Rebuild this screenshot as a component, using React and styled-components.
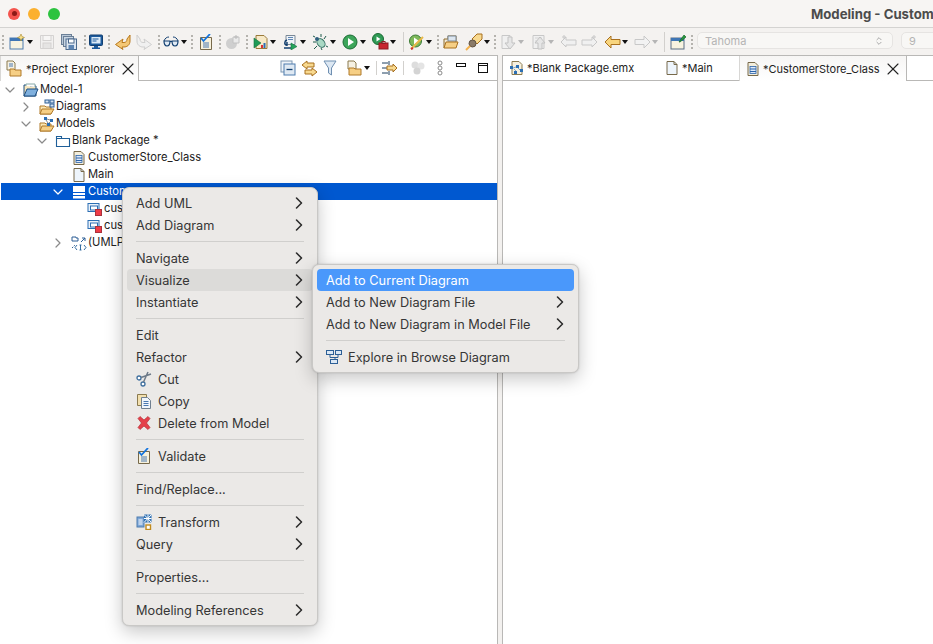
import React from 'react';
import styled, { createGlobalStyle } from 'styled-components';
import { ChevronRight, ChevronDown, X, ChevronsUpDown } from 'lucide-react';

const Global = createGlobalStyle`
  html, body { margin: 0; padding: 0; background: #fff; }
  body { font-family: Inter, "Noto Sans", "Liberation Sans", sans-serif; color: #222; }
  * { box-sizing: border-box; }
  svg { flex: none; }
`;

const Window = styled.div`
  position: relative;
  width: 933px;
  height: 644px;
  overflow: hidden;
  background: #f3f1ef;
  display: flex;
  flex-direction: column;
`;

const TitleBar = styled.div`
  height: 28px;
  flex: none;
  display: flex;
  align-items: center;
  padding-left: 8px;
  background: #f7f5f3;
  border-bottom: 1px solid #d4d3d1;
  overflow: hidden;
`;

const Light = styled.span`
  flex: none;
  width: 12px;
  height: 12px;
  border-radius: 50%;
  margin-right: 8px;
  background: ${p => p.$color};
  display: flex;
  align-items: center;
  justify-content: center;
  &::after {
    content: '';
    width: 5px;
    height: 5px;
    border-radius: 50%;
    background: ${p => p.$dot || 'transparent'};
  }
`;

const Title = styled.div`
  flex: none;
  margin-left: 743px;
  font-size: 13.2px;
  font-weight: 700;
  color: #4c4c4c;
  white-space: nowrap;
`;

const Toolbar = styled.div`
  height: 27px;
  flex: none;
  display: flex;
  align-items: center;
  background: #f4f2f0;
`;

const Slot = styled.span`
  flex: none;
  display: flex;
  align-items: center;
  justify-content: center;
  width: ${p => p.$w}px;
  margin-left: ${p => p.$gap}px;
  opacity: ${p => (p.$off ? 0.35 : 1)};
`;

const Grip = styled.span`
  flex: none;
  width: 2px;
  height: 14px;
  margin-left: ${p => p.$gap}px;
  background: repeating-linear-gradient(to bottom, #b5b3ae 0 2px, transparent 2px 4px);
`;

const VLine = styled.span`
  flex: none;
  width: 1px;
  height: ${p => p.$h || 20}px;
  margin-left: ${p => p.$gap}px;
  background: #d2d0cd;
`;

const Arrow = styled.span`
  flex: none;
  width: 0;
  height: 0;
  margin-left: ${p => p.$gap}px;
  border-left: 3px solid transparent;
  border-right: 3px solid transparent;
  border-top: 4px solid ${p => (p.$off ? '#b5b5b5' : '#111')};
`;

const FontBox = styled.div`
  flex: none;
  height: 17px;
  width: ${p => p.$w}px;
  margin: 0 0 2px ${p => p.$gap}px;
  padding: 0 8px 0 7px;
  display: flex;
  align-items: center;
  justify-content: space-between;
  font-size: 11px;
  color: #b4b4b4;
  background: #f8f7f5;
  border: 1px solid #e6e4e2;
  border-radius: 5px;
`;

const Panels = styled.div`
  flex: 1;
  display: flex;
  gap: 4px;
  min-height: 0;
`;

const Panel = styled.section`
  flex: ${p => (p.$w ? `0 0 ${p.$w}px` : '1')};
  display: flex;
  flex-direction: column;
  background: #fff;
  border-top: 1px solid #b9b8b6;
  border-right: ${p => (p.$w ? '1px solid #b9b8b6' : '0')};
  border-left: ${p => (p.$w ? '0' : '1px solid #b9b8b6')};
`;

const TabStrip = styled.div`
  height: 25px;
  flex: none;
  display: flex;
  align-items: stretch;
  background: #fff;
`;

const Tab = styled.div`
  flex: none;
  display: flex;
  align-items: center;
  width: ${p => p.$w}px;
  padding-left: ${p => p.$pad}px;
  gap: ${p => p.$space}px;
  font-size: 11px;
  white-space: nowrap;
  color: #222;
  border-bottom: ${p => (p.$active ? '0' : '1px solid #b9b8b6')};
  background: ${p => (p.$active ? 'linear-gradient(#f6f5f4, #fff)' : '#fff')};
  border-left: ${p => (p.$active ? '1px solid #d8d7d5' : '0')};
  border-right: ${p => (p.$active ? '1px solid #b9b8b6' : '0')};
`;

const TabClose = styled(X)`
  margin-left: auto;
  margin-right: 3px;
  color: #222;
`;

const TabFill = styled.div`
  flex: 1;
  display: flex;
  align-items: center;
  padding-left: ${p => p.$pad || 0}px;
  border-bottom: 1px solid #b9b8b6;
`;

const Tree = styled.div`
  display: flex;
  flex-direction: column;
`;

const Row = styled.div`
  height: 17px;
  display: flex;
  align-items: center;
  margin-left: 1px;
  padding-left: ${p => 1 + p.$depth * 16}px;
  font-size: 11.2px;
  white-space: nowrap;
  color: ${p => (p.$selected ? '#fff' : '#222')};
  background: ${p => (p.$selected ? '#0058d0' : 'transparent')};
`;

const RowLabel = styled.span`
  line-height: 16px;
  margin-bottom: 1px;
`;

const Twist = styled.span`
  flex: none;
  width: 16px;
  display: flex;
  justify-content: center;
  color: ${p => (p.$selected ? '#fff' : '#8a8a8a')};
`;

const RowIcon = styled.span`
  flex: none;
  width: 22px;
  padding-right: 1px;
  display: flex;
  justify-content: flex-end;
`;

const Menu = styled.div`
  position: absolute;
  left: ${p => p.$x}px;
  top: ${p => p.$y}px;
  width: ${p => p.$w}px;
  padding: 4px;
  background: #ebe9e7;
  border-radius: 7px;
  border: 1px solid #c9c8c6;
  box-shadow: 0 6px 18px rgba(0, 0, 0, 0.22), 0 0 2px rgba(0, 0, 0, 0.18);
  font-size: 12.75px;
  color: #363636;
`;

const Item = styled.div`
  height: 22px;
  display: flex;
  align-items: center;
  padding: 0 9px;
  border-radius: 4px;
  white-space: nowrap;
  color: ${p => (p.$active ? '#fff' : 'inherit')};
  background: ${p => (p.$active ? '#4a98fb' : p.$hover ? '#dcdbd9' : 'transparent')};
`;

const ItemIcon = styled.span`
  flex: none;
  width: 22px;
  display: flex;
  align-items: center;
`;

const ItemArrow = styled(ChevronRight)`
  margin-left: auto;
  margin-right: -5px;
  color: #2c2c2c;
`;

const Sep = styled.div`
  height: 1px;
  margin: 5px 9px;
  background: #d0cfcd;
`;

/* toolbar + tree drawings, 16 box */
const S = ({ children, w = 16, h = 16 }) => (
  <svg width={w} height={h} viewBox={`0 0 ${w} ${h}`} fill="none">{children}</svg>
);

const ModelFolder = () => (
  <S>
    <path d="M1 14V3h5l1 1h6v10z" fill="#f7e6bd" stroke="#1f4f80" />
    <path d="M3 4V2h9v3" fill="#fff" stroke="#8aa" />
    <path d="M1 14l3-7h11l-3 7z" fill="#7fb0de" stroke="#1f4f80" />
  </S>
);
const DiagramFolder = () => (
  <S>
    <path d="M1 15V7h5l1 1h5v7z" fill="#fbe7b4" stroke="#b07a2a" />
    <path d="M1 15l2-5h12l-3 5z" fill="#f6cf85" stroke="#b07a2a" />
    <rect x="6" y="1" width="4" height="3" fill="#cfe0f2" stroke="#2c5f96" />
    <rect x="11" y="1" width="4" height="3" fill="#cfe0f2" stroke="#2c5f96" />
    <rect x="11" y="5" width="4" height="3" fill="#cfe0f2" stroke="#2c5f96" />
  </S>
);
const ModelsFolder = () => (
  <S>
    <path d="M1 15V7h5l1 1h5v7z" fill="#fbe7b4" stroke="#b07a2a" />
    <path d="M1 15l2-5h12l-3 5z" fill="#f6cf85" stroke="#b07a2a" />
    <rect x="5" y="1" width="3" height="3" fill="#2c6fb3" />
    <rect x="11" y="3" width="3" height="3" fill="#2c6fb3" />
    <rect x="8" y="7" width="3" height="3" fill="#2c6fb3" />
    <path d="M7 4l2 3M8 3l3 1M11 6l-1 1" stroke="#555" strokeWidth=".7" />
  </S>
);
const PackageIcon = () => (
  <S>
    <path d="M1.5 13.5v-10h5v2h8v8z" fill="#fff" stroke="#1f5f99" strokeWidth="1.1" />
    <path d="M1.5 5.5h5" stroke="#1f5f99" />
  </S>
);
const ClassDoc = () => (
  <S>
    <path d="M3 1.5h7l3 3v10H3z" fill="#f3eedd" stroke="#77694a" />
    <rect x="5" y="5.5" width="6" height="7" fill="#dfeafa" stroke="#2a62a8" strokeWidth=".8" />
    <path d="M5 8h6M5 10.5h6" stroke="#2a62a8" />
  </S>
);
const PlainDoc = () => (
  <S>
    <path d="M3 1.5h7l3 3v10H3z" fill="#eef5fc" stroke="#77694a" />
    <path d="M10 1.5v3h3" stroke="#77694a" />
  </S>
);
const ClassBox = () => (
  <S>
    <rect x="2.5" y="2.5" width="11" height="11.5" fill="#fff" stroke="#fff" />
    <path d="M2 8.5h12M2 11.5h12" stroke="#0058d0" />
  </S>
);
const AttrIcon = () => (
  <S>
    <rect x="1" y="2.5" width="11" height="8" fill="#eaf2fa" stroke="#2c6fb3" />
    <rect x="3.5" y="5" width="7" height="4" fill="#fff" stroke="#2c6fb3" />
    <rect x="8.5" y="8.5" width="6" height="6" fill="#ee3b47" stroke="#a8323c" />
  </S>
);
const PortIcon = () => (
  <S>
    <path d="M1 2h4v1h2v3H1z" fill="#fff" stroke="#2c5f96" />
    <path d="M10 7l4-4M11 3h3v3" stroke="#2c5f96" />
    <path d="M1 13l3-3" stroke="#2c5f96" strokeDasharray="1.5 1" />
    <path d="M6 10l-2 2.5 2 2.5M13 10l2 2.5-2 2.5M9.5 10v5M8.5 10h2M8.5 15h2" stroke="#1f5f99" strokeWidth=".9" />
  </S>
);
const EmxIcon = () => (
  <S>
    <path d="M3 1.5h7l3 3v10H3z" fill="#f7f1e0" stroke="#8b7a4f" />
    <rect x="1" y="6" width="3" height="3" fill="#2c6fb3" />
    <rect x="7" y="5" width="3" height="3" fill="#2c6fb3" />
    <rect x="11" y="9" width="3" height="3" fill="#2c6fb3" />
    <rect x="5" y="11" width="3" height="3" fill="#2c6fb3" />
    <path d="M4 8l3-1M9 8l2 2M7 11l-2-2" stroke="#2c6fb3" strokeWidth=".6" />
  </S>
);
const ExplorerIcon = () => (
  <S w={17} h={17}>
    <path d="M2 1h6l2 2v7H2z" fill="#f5f1e4" stroke="#8b7a4f" />
    <path d="M4 4h4M4 6h4" stroke="#4a78b0" />
    <path d="M5 16V9h4l1 1h6v6z" fill="#f6cf85" stroke="#b07a2a" />
  </S>
);

const NewIcon = () => (
  <S>
    <rect x="1" y="4" width="13" height="11" fill="#f8f3e0" stroke="#4f7cae" />
    <rect x="1" y="4" width="13" height="3" fill="#3f76b5" />
    <path d="M12 0l1 2.5 2.5 1-2.5 1-1 2.5-1-2.5-2.5-1 2.5-1z" fill="#f7e08a" stroke="#a88a2c" strokeWidth=".6" />
  </S>
);
const SaveIcon = () => (
  <S>
    <path d="M1.5 1.5h13v13h-13z" fill="#eee" stroke="#999" />
    <rect x="4" y="1.5" width="8" height="5" fill="#fff" stroke="#999" />
    <rect x="4" y="9" width="8" height="5.5" fill="#ccc" stroke="#999" />
  </S>
);
const SaveAllIcon = () => (
  <S>
    <rect x="0.5" y="0.5" width="10" height="10" fill="#b9c8d8" stroke="#6b7f96" />
    <rect x="2.5" y="2.5" width="10" height="10" fill="#c8d5e2" stroke="#6b7f96" />
    <rect x="5" y="5" width="10.5" height="10.5" fill="#dde6f0" stroke="#4c6a8d" />
    <rect x="7.5" y="5" width="5.5" height="4" fill="#fff" stroke="#4c6a8d" />
    <rect x="7.5" y="11" width="5.5" height="4.5" fill="#5f86b3" />
  </S>
);
const MonitorIcon = () => (
  <S>
    <rect x="1.5" y="1" width="13" height="10.5" rx="1" fill="#1c5a9c" stroke="#123f70" />
    <rect x="3.5" y="3" width="9" height="6.5" fill="#dcebf8" />
    <path d="M4.5 5h6M4.5 7h4" stroke="#1c5a9c" />
    <path d="M6 12h4v1.5h2V15H4v-1.5h2z" fill="#1c5a9c" />
  </S>
);
const UndoIcon = ({ off }) => (
  <S>
    <path
      d="M15 1v6c0 4-3 6-6 6H7l1 2.5L0.5 10.5 8 5l-1 3.5h2c2 0 3-1.5 3-3.5z"
      fill={off ? '#f0f0f0' : '#f4c774'}
      stroke={off ? '#cfcfcf' : '#b8791d'}
      transform={off ? 'matrix(-1 0 0 1 16 0)' : undefined}
    />
  </S>
);
const GlassesIcon = () => (
  <S>
    <path d="M1 7c1-3 3-4 5-4M15 7c-1-3-3-4-5-4" stroke="#123f70" />
    <path d="M1 7h6c0 3-1 5-3 5S1 10 1 7zM9 7h6c0 3-1 5-3 5s-3-2-3-5z" fill="#dfe9f3" stroke="#123f70" strokeWidth="1.2" />
    <path d="M7 7.5h2" stroke="#123f70" />
  </S>
);
const TaskIcon = () => (
  <S>
    <path d="M2.5 3.5h11v12h-11z" fill="#f7f1dd" stroke="#77694a" />
    <path d="M5 9h6M5 11h6M5 13h6" stroke="#4a78b0" />
    <path d="M3 4l2.5 3L12 0" stroke="#1273de" strokeWidth="1.8" />
  </S>
);
const GrayBadgeIcon = () => (
  <S>
    <circle cx="6.5" cy="9.5" r="5.5" fill="#cfcfcf" />
    <path d="M8 3h6v6H8z" fill="#eaeaea" stroke="#c2c2c2" />
    <path d="M11 1v4M9 3h4" stroke="#bbb" />
  </S>
);
const CoverageIcon = () => (
  <S>
    <path d="M3 1.5h8l3 3v10H3z" fill="#f7e9c6" stroke="#9a7a3a" />
    <path d="M1 4l7 5-7 5z" fill="#1e9b55" stroke="#15703d" strokeWidth=".6" />
    <rect x="8" y="11" width="2" height="3" fill="#d33" />
    <rect x="10.5" y="9" width="2" height="5" fill="#2c6fb3" />
  </S>
);
const ScopeIcon = () => (
  <S>
    <path d="M4 1.5h9v9H4z" fill="#eef3f8" stroke="#7a8896" />
    <path d="M6 3.5h5M6 5.5h5" stroke="#5f86b3" />
    <path d="M5 6c-3 1-3 5 0 5M2 14h7M5 8v4" stroke="#123f70" strokeWidth="1.4" />
    <path d="M9 9l6 3.5-6 3.5z" fill="#25a45c" stroke="#15703d" strokeWidth=".6" />
  </S>
);
const BugIcon = () => (
  <S>
    <ellipse cx="9" cy="9" rx="3.5" ry="4.8" fill="#a9d8c4" stroke="#2d6b5e" transform="rotate(-40 9 9)" />
    <circle cx="5" cy="5" r="2" fill="#2f5f7e" />
    <path d="M1 8h3M5 12l-3 3M9 0v3M14 2l-2 3M9 14l1 2M14 12l2 1M1 2l2 1" stroke="#1d5a4a" />
  </S>
);
const RunIcon = () => (
  <S>
    <circle cx="8" cy="8" r="7" fill="#3da55a" stroke="#1b6b34" />
    <path d="M6 4l6 4-6 4z" fill="#fff" />
  </S>
);
const ExtRunIcon = () => (
  <S w={17} h={17}>
    <circle cx="6" cy="6" r="5.5" fill="#2f9a55" stroke="#1b6b34" />
    <path d="M4.5 3.5l4 2.5-4 2.5z" fill="#fff" />
    <rect x="7" y="10" width="9" height="6" fill="#c8242e" stroke="#8e1a22" />
    <rect x="10" y="8.5" width="3" height="2" fill="none" stroke="#8e1a22" />
  </S>
);
const CheckRunIcon = () => (
  <S>
    <circle cx="6.5" cy="7" r="6" fill="#7eb85a" stroke="#3b7a35" />
    <path d="M5 3.5l5 3.5-5 3.5z" fill="#fff" />
    <path d="M2 15L14 3" stroke="#e9b949" strokeWidth="2" />
    <path d="M2 15l2-1" stroke="#c33" strokeWidth="2" />
  </S>
);
const ToolFolder = () => (
  <S>
    <path d="M1 14V5h4V2h8v6" fill="#f0e8d4" stroke="#8c6a2d" />
    <rect x="5" y="2" width="8" height="5" fill="#dce6f0" stroke="#7a8896" />
    <path d="M1 14l2-6h12l-2 6z" fill="#f6cf85" stroke="#a8701f" />
  </S>
);
const PenIcon = () => (
  <S w={18} h={18}>
    <path d="M7 6l5-5h5v5l-5 5z" fill="#f8d98f" stroke="#a8701f" />
    <circle cx="7.5" cy="10.5" r="3.5" fill="#8a7a68" stroke="#5f5141" />
    <path d="M5 13l-4 4" stroke="#f3b24e" strokeWidth="2" />
  </S>
);
const NavDown = () => (
  <S>
    <path d="M2 1.5h8v13H2z" fill="#f0f0f0" stroke="#c8c8c8" />
    <path d="M8 3h4v6h3l-5 6-5-6h3z" fill="#e6e6e6" stroke="#c2c2c2" />
  </S>
);
const NavUp = () => (
  <S>
    <path d="M3 1.5h11v13H3z" fill="#f0f0f0" stroke="#c8c8c8" />
    <path d="M5 4h7M5 7h7" stroke="#d4d4d4" />
    <path d="M8 15V9H5l5-6 5 6h-3v6z" fill="#e6e6e6" stroke="#c2c2c2" />
  </S>
);
const StarArrow = ({ flip }) => (
  <svg width="17" height="16" viewBox="0 0 17 16" fill="none" style={flip ? { transform: 'scaleX(-1)' } : undefined}>
    <path d="M1 8l5-5v3h10v5H6v2z" fill="#f0f0f0" stroke="#c8c8c8" />
    <path d="M4 1v4M2 3h4" stroke="#c8c8c8" />
  </svg>
);
const BackArrow = ({ off, flip }) => (
  <svg width="17" height="14" viewBox="0 0 17 14" fill="none" style={flip ? { transform: 'scaleX(-1)' } : undefined}>
    <path d="M1 7l6-6v3.5h9v5H7V13z" fill={off ? '#f2f2f2' : '#f8d57e'} stroke={off ? '#c8c8c8' : '#a8701f'} />
  </svg>
);
const PinIcon = () => (
  <S>
    <rect x="1" y="4" width="13" height="11" fill="#f8f3e0" stroke="#5d6f83" />
    <rect x="1" y="4" width="13" height="3" fill="#3f76b5" />
    <path d="M9 8l5-7 2 2-6 5z" fill="#2a9a3f" stroke="#16692a" strokeWidth=".7" />
  </S>
);

const CollapseIcon = () => (
  <S>
    <rect x="1" y="1" width="11" height="11" fill="#eef3f8" stroke="#7d97b3" />
    <rect x="4" y="4" width="11" height="11" fill="#dfe9f3" stroke="#4f7cae" />
    <path d="M6.5 9.5h6" stroke="#123f70" strokeWidth="1.3" />
  </S>
);
const LinkIcon = () => (
  <S w={17} h={17}>
    <path d="M1 5l5-4v2h7v4H6v2z" fill="#f8d98f" stroke="#a8701f" />
    <path d="M16 12l-5-4v2H4v4h7v2z" fill="#f8d98f" stroke="#a8701f" />
  </S>
);
const FilterIcon = () => (
  <S w={14} h={17}>
    <path d="M1 1h12L8.5 8v7l-3-2V8z" fill="#dde8f3" stroke="#6f8fb1" />
  </S>
);
const DocFolder = () => (
  <S w={17} h={17}>
    <path d="M2 1h6l2 2v6H2z" fill="#f5f1e4" stroke="#8b7a4f" />
    <path d="M3 15V8h5l1 1h6v6z" fill="#f6cf85" stroke="#b07a2a" />
  </S>
);
const SyncIcon = () => (
  <S w={17} h={17}>
    <path d="M1 3h6M1 13h6M1 8h5" stroke="#1c3f5f" />
    <path d="M8 1v4M8 11v4" stroke="#1c3f5f" />
    <path d="M6 6h6V4l4 4-4 4v-2H6z" fill="#f8d98f" stroke="#a8701f" />
  </S>
);
const DotsIcon = () => (
  <S>
    <circle cx="5" cy="5" r="3.5" fill="#ddd" />
    <circle cx="11" cy="6" r="3.5" fill="#e4e4e4" />
    <circle cx="7" cy="11" r="3.5" fill="#d4d4d4" />
  </S>
);
const ChainIcon = () => (
  <S>
    <circle cx="8" cy="3" r="2" stroke="#8a8a8a" />
    <circle cx="8" cy="8" r="2" stroke="#8a8a8a" />
    <circle cx="8" cy="13" r="2" stroke="#8a8a8a" />
  </S>
);
const MinIcon = () => (
  <S>
    <rect x="3.5" y="3.5" width="9" height="3" fill="#fff" stroke="#111" />
  </S>
);
const MaxIcon = () => (
  <S>
    <rect x="3.5" y="3.5" width="9" height="9" fill="#fff" stroke="#111" />
    <path d="M3.5 5.5h9" stroke="#111" />
  </S>
);

const ScissorsIcon = () => (
  <S>
    <circle cx="3" cy="7" r="2" fill="#fff" stroke="#3f6f9e" strokeWidth="1.3" />
    <circle cx="7" cy="13" r="2" fill="#fff" stroke="#3f6f9e" strokeWidth="1.3" />
    <path d="M5 6.5L15 3M7.5 11L12 1" stroke="#6d7a88" strokeWidth="1.5" />
  </S>
);
const CopyIcon = () => (
  <S>
    <path d="M1.5 1.5h9v11h-9z" fill="#f2dfae" stroke="#8b7a4f" />
    <path d="M5.5 4.5h6l3 3v8h-9z" fill="#f0f5fb" stroke="#6f7f90" />
    <path d="M7.5 8.5h5M7.5 10.5h5M7.5 12.5h5" stroke="#4a78b0" />
  </S>
);
const DeleteIcon = () => (
  <S>
    <path d="M2 3.5L4 1.5l4 3.5 4-3.5 2 2-3.5 4.5 3.5 4.5-2 2-4-3.5-4 3.5-2-2L5.5 8z" fill="#e5404a" stroke="#b5303a" strokeWidth=".7" />
  </S>
);
const TransformIcon = () => (
  <S>
    <rect x="1" y="3" width="7" height="10" fill="#7da6d8" stroke="#4f7cae" />
    <path d="M2.5 6h4M2.5 8h4M2.5 10h4" stroke="#fff" />
    <rect x="8" y="0.5" width="7.5" height="8" fill="#2c6fb3" />
    <path d="M8 0.5l7.5 8M15.5 0.5L8 8.5M12 0.5v8M8 4.5h7.5" stroke="#fff" />
    <rect x="10" y="11" width="4.5" height="4.5" fill="#fff" stroke="#c08a1e" strokeWidth="1.4" />
  </S>
);
const BrowseIcon = () => (
  <S>
    <rect x="0.5" y="1.5" width="7" height="4" fill="#dbe8f5" stroke="#2c5f96" />
    <rect x="9.5" y="1.5" width="6" height="4" fill="#dbe8f5" stroke="#2c5f96" />
    <rect x="4.5" y="10.5" width="7" height="4" fill="#dbe8f5" stroke="#2c5f96" />
    <path d="M4 5.5v3h5M12 5.5v3H9v2" stroke="#2c5f96" />
  </S>
);

// x positions from the reference turned into gaps between items
const tools = [
  { grip: true, gap: 2 },
  { icon: NewIcon, w: 16, gap: 5, arrow: 2 },
  { icon: SaveIcon, w: 16, gap: 6, off: true },
  { icon: SaveAllIcon, w: 16, gap: 6 },
  { grip: true, gap: 7 },
  { icon: MonitorIcon, w: 16, gap: 2 },
  { grip: true, gap: 4 },
  { icon: UndoIcon, w: 16, gap: 5 },
  { icon: () => <UndoIcon off />, w: 16, gap: 5 },
  { grip: true, gap: 6 },
  { icon: GlassesIcon, w: 16, gap: 3, arrow: 2 },
  { grip: true, gap: 4 },
  { icon: TaskIcon, w: 16, gap: 5 },
  { grip: true, gap: 5 },
  { icon: GrayBadgeIcon, w: 16, gap: 4 },
  { grip: true, gap: 5 },
  { icon: CoverageIcon, w: 16, gap: 5, arrow: 1 },
  { icon: ScopeIcon, w: 16, gap: 6, arrow: 2 },
  { icon: BugIcon, w: 16, gap: 6, arrow: 2 },
  { icon: RunIcon, w: 16, gap: 6, arrow: 2 },
  { icon: ExtRunIcon, w: 17, gap: 6, arrow: 1 },
  { line: true, gap: 7 },
  { icon: CheckRunIcon, w: 16, gap: 5, arrow: 1 },
  { grip: true, gap: 5 },
  { icon: ToolFolder, w: 16, gap: 4 },
  { icon: PenIcon, w: 18, gap: 6, arrow: 1 },
  { grip: true, gap: 4 },
  { icon: NavDown, w: 16, gap: 4, arrow: 2, arrowOff: true },
  { icon: NavUp, w: 16, gap: 6, arrow: 2, arrowOff: true },
  { icon: () => <StarArrow />, w: 17, gap: 6 },
  { icon: () => <StarArrow flip />, w: 17, gap: 4 },
  { icon: () => <BackArrow />, w: 17, gap: 6, arrow: 1 },
  { icon: () => <BackArrow off flip />, w: 17, gap: 6, arrow: 1, arrowOff: true },
  { line: true, gap: 6 },
  { icon: PinIcon, w: 16, gap: 5 },
  { grip: true, gap: 5 },
];

const viewTools = [
  { icon: CollapseIcon, w: 16, gap: 0 },
  { icon: LinkIcon, w: 17, gap: 5 },
  { icon: FilterIcon, w: 14, gap: 5 },
  { icon: DocFolder, w: 17, gap: 9, arrow: 1 },
  { line: true, gap: 6, h: 14 },
  { icon: SyncIcon, w: 17, gap: 4 },
  { line: true, gap: 5, h: 14 },
  { icon: DotsIcon, w: 16, gap: 6 },
  { icon: ChainIcon, w: 16, gap: 6 },
  { icon: MinIcon, w: 16, gap: 5 },
  { icon: MaxIcon, w: 16, gap: 6 },
];

const renderTool = (t, i) => {
  if (t.grip) return <Grip key={i} $gap={t.gap} />;
  if (t.line) return <VLine key={i} $gap={t.gap} $h={t.h} />;
  const Icon = t.icon;
  return (
    <React.Fragment key={i}>
      <Slot $w={t.w} $gap={t.gap} $off={t.off}><Icon /></Slot>
      {t.arrow ? <Arrow $gap={t.arrow} $off={t.arrowOff} /> : null}
    </React.Fragment>
  );
};

const treeRows = [
  { depth: 0, open: true, icon: ModelFolder, label: 'Model-1' },
  { depth: 1, closed: true, icon: DiagramFolder, label: 'Diagrams' },
  { depth: 1, open: true, icon: ModelsFolder, label: 'Models' },
  { depth: 2, open: true, icon: PackageIcon, label: 'Blank Package *' },
  { depth: 3, icon: ClassDoc, label: 'CustomerStore_Class' },
  { depth: 3, icon: PlainDoc, label: 'Main' },
  { depth: 3, open: true, selected: true, icon: ClassBox, label: 'Custom' },
  { depth: 4, icon: AttrIcon, label: 'cus' },
  { depth: 4, icon: AttrIcon, label: 'cus' },
  { depth: 3, closed: true, icon: PortIcon, label: '(UMLP' },
];

const mainMenu = [
  [{ label: 'Add UML', more: true }, { label: 'Add Diagram', more: true }],
  [{ label: 'Navigate', more: true }, { label: 'Visualize', more: true, hover: true }, { label: 'Instantiate', more: true }],
  [
    { label: 'Edit' },
    { label: 'Refactor', more: true },
    { label: 'Cut', icon: ScissorsIcon },
    { label: 'Copy', icon: CopyIcon },
    { label: 'Delete from Model', icon: DeleteIcon },
  ],
  [{ label: 'Validate', icon: TaskIcon }],
  [{ label: 'Find/Replace...' }],
  [{ label: 'Transform', icon: TransformIcon, more: true }, { label: 'Query', more: true }],
  [{ label: 'Properties...' }],
  [{ label: 'Modeling References', more: true }],
];

const subMenu = [
  [
    { label: 'Add to Current Diagram', active: true },
    { label: 'Add to New Diagram File', more: true },
    { label: 'Add to New Diagram in Model File', more: true },
  ],
  [{ label: 'Explore in Browse Diagram', icon: BrowseIcon }],
];

const MenuBody = ({ groups }) =>
  groups.map((group, g) => (
    <React.Fragment key={g}>
      {g > 0 && <Sep />}
      {group.map(item => {
        const Icon = item.icon;
        return (
          <Item key={item.label} $active={item.active} $hover={item.hover}>
            {Icon && <ItemIcon><Icon /></ItemIcon>}
            {item.label}
            {item.more && <ItemArrow size={20} strokeWidth={1.9} />}
          </Item>
        );
      })}
    </React.Fragment>
  ));

const App = () => (
  <Window>
    <Global />
    <TitleBar>
      <Light $color="#f4544d" $dot="#8c1a16" />
      <Light $color="#fbb02e" />
      <Light $color="#2cc33f" />
      <Title>Modeling - Custom</Title>
    </TitleBar>
    <Toolbar>
      {tools.map(renderTool)}
      <FontBox $w={196} $gap={4}>
        Tahoma
        <ChevronsUpDown size={10} color="#999" />
      </FontBox>
      <FontBox $w={60} $gap={8}>9</FontBox>
    </Toolbar>
    <Panels>
      <Panel $w={498}>
        <TabStrip>
          <Tab $active $w={139} $pad={4} $space={4}>
            <ExplorerIcon />
            *Project Explorer
            <TabClose size={20} strokeWidth={1.3} />
          </Tab>
          <TabFill $pad={141}>
            {viewTools.map(renderTool)}
          </TabFill>
        </TabStrip>
        <Tree>
          {treeRows.map((r, i) => {
            const Icon = r.icon;
            return (
              <Row key={i} $depth={r.depth} $selected={r.selected}>
                <Twist $selected={r.selected}>
                  {r.open && <ChevronDown size={16} strokeWidth={1.8} />}
                  {r.closed && <ChevronRight size={16} strokeWidth={1.8} />}
                </Twist>
                <RowIcon><Icon /></RowIcon>
                <RowLabel>{r.label}</RowLabel>
              </Row>
            );
          })}
        </Tree>
      </Panel>
      <Panel>
        <TabStrip>
          <Tab $w={155} $pad={6} $space={2}><EmxIcon />*Blank Package.emx</Tab>
          <Tab $w={81} $pad={6} $space={2}><PlainDoc />*Main</Tab>
          <Tab $active $w={168} $pad={5} $space={2}>
            <ClassDoc />
            *CustomerStore_Class
            <TabClose size={20} strokeWidth={1.3} />
          </Tab>
          <TabFill />
        </TabStrip>
      </Panel>
    </Panels>
    <Menu $x={122} $y={187} $w={196}><MenuBody groups={mainMenu} /></Menu>
    <Menu $x={312} $y={264} $w={267}><MenuBody groups={subMenu} /></Menu>
  </Window>
);

export default App;
